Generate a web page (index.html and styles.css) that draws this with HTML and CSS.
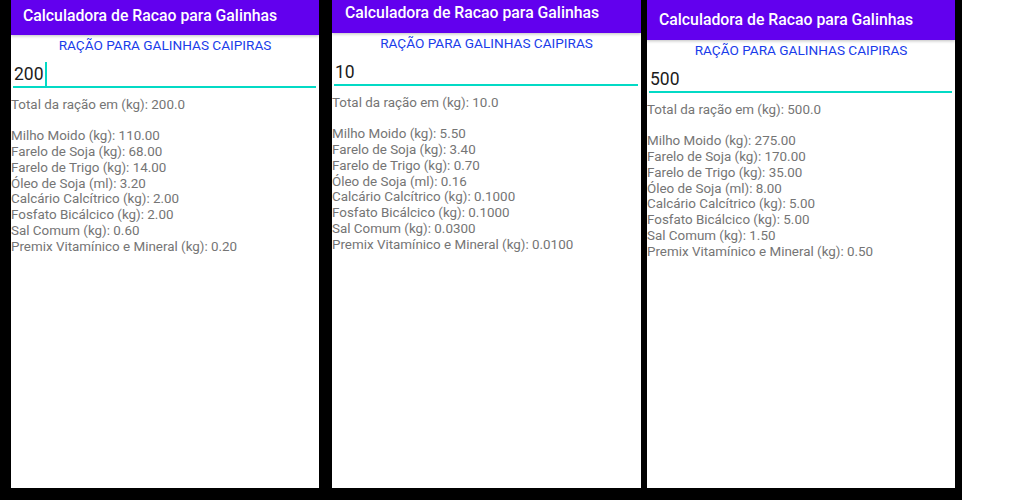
FILE: index.html
```html
<!DOCTYPE html>
<html lang="pt">
<head>
    <meta charset="utf-8" />
    <link rel="stylesheet" href="styles.css">
    <title>Calculadora de Racao</title>
</head>
<body>
    <div class="frame">
        <div class="phone phone-one">
            <div class="appbar">Calculadora de Racao para Galinhas</div>
            <div class="subtitle">RAÇÃO PARA GALINHAS CAIPIRAS</div>
            <div class="field">200<span class="caret"></span></div>
            <div class="total">Total da ração em (kg): 200.0</div>
            <div class="list">
                <div>Milho Moido (kg): 110.00</div>
                <div>Farelo de Soja (kg): 68.00</div>
                <div>Farelo de Trigo (kg): 14.00</div>
                <div>Óleo de Soja (ml): 3.20</div>
                <div>Calcário Calcítrico (kg): 2.00</div>
                <div>Fosfato Bicálcico (kg): 2.00</div>
                <div>Sal Comum (kg): 0.60</div>
                <div>Premix Vitamínico e Mineral (kg): 0.20</div>
            </div>
        </div>
        <div class="phone phone-two">
            <div class="appbar">Calculadora de Racao para Galinhas</div>
            <div class="subtitle">RAÇÃO PARA GALINHAS CAIPIRAS</div>
            <div class="field">10</div>
            <div class="total">Total da ração em (kg): 10.0</div>
            <div class="list">
                <div>Milho Moido (kg): 5.50</div>
                <div>Farelo de Soja (kg): 3.40</div>
                <div>Farelo de Trigo (kg): 0.70</div>
                <div>Óleo de Soja (ml): 0.16</div>
                <div>Calcário Calcítrico (kg): 0.1000</div>
                <div>Fosfato Bicálcico (kg): 0.1000</div>
                <div>Sal Comum (kg): 0.0300</div>
                <div>Premix Vitamínico e Mineral (kg): 0.0100</div>
            </div>
        </div>
        <div class="phone phone-three">
            <div class="appbar">Calculadora de Racao para Galinhas</div>
            <div class="subtitle">RAÇÃO PARA GALINHAS CAIPIRAS</div>
            <div class="field">500</div>
            <div class="total">Total da ração em (kg): 500.0</div>
            <div class="list">
                <div>Milho Moido (kg): 275.00</div>
                <div>Farelo de Soja (kg): 170.00</div>
                <div>Farelo de Trigo (kg): 35.00</div>
                <div>Óleo de Soja (ml): 8.00</div>
                <div>Calcário Calcítrico (kg): 5.00</div>
                <div>Fosfato Bicálcico (kg): 5.00</div>
                <div>Sal Comum (kg): 1.50</div>
                <div>Premix Vitamínico e Mineral (kg): 0.50</div>
            </div>
        </div>
    </div>
</body>
</html>
```

FILE: styles.css
```css
body {
    margin: 0;
    background-color: #fff;
    font-family: Roboto, "Liberation Sans", sans-serif;
}

.frame {
    display: flex;
    width: 962px;
    height: 500px;
    box-sizing: border-box;
    padding: 0 6px 12px 11px;
    background-color: #000;
}

.phone {
    width: 308px;
    background-color: #fff;
}
.phone-one {
    margin-right: 13px;
}
.phone-two {
    width: 309px;
    margin-right: 6px;
}

.appbar {
    height: 33px;
    box-sizing: border-box;
    padding: 3px 0 0 13px;
    line-height: 20px;
    background-color: #6200ee;
    color: #fff;
    font-size: 15.8px;
    font-weight: 500;
    box-shadow: 0 1px 3px rgba(0, 0, 0, 0.25);
}
.phone-one .appbar {
    height: 35px;
    padding-top: 6px;
    padding-left: 12px;
}
.phone-three .appbar {
    height: 40px;
    padding-top: 10px;
    padding-left: 12px;
}

.subtitle {
    margin-top: 1px;
    height: 18px;
    line-height: 18px;
    text-align: center;
    color: #1a3cea;
    font-size: 13.6px;
}

.field {
    margin: 0 3px 0 2px;
    padding: 8px 0 0 1px;
    height: 24px;
    line-height: 24px;
    font-size: 17.5px;
    color: #1c1c1c;
    border-bottom: 2px solid #03dac5;
    display: flex;
    align-items: center;
}
.caret {
    width: 2px;
    height: 24px;
    margin-left: 1px;
    background-color: #03dac5;
}

.total {
    margin-top: 9px;
    line-height: 16px;
    font-size: 13.4px;
    color: #757575;
}

.list {
    margin-top: 15px;
    line-height: 15.86px;
    font-size: 13.4px;
    color: #757575;
}
```
